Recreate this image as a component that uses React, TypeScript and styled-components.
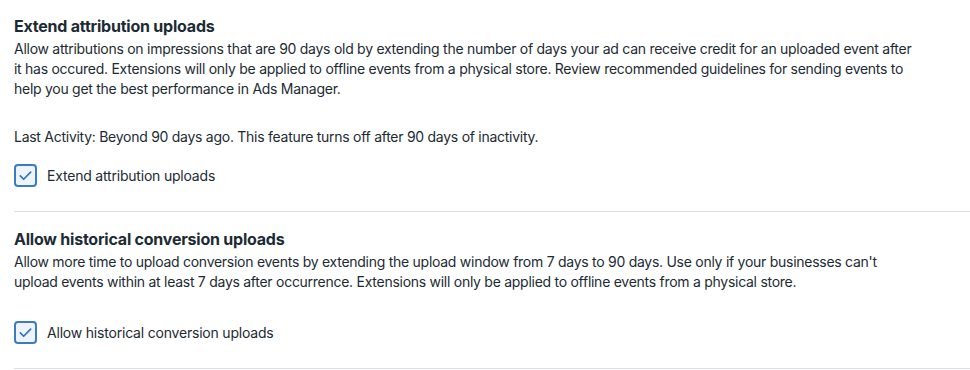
import React, { useState } from 'react'
import styled, { createGlobalStyle } from 'styled-components'

const GlobalStyle = createGlobalStyle`
  body {
    margin: 0;
    background: #ffffff;
    font-family: Inter, 'Noto Sans', 'Liberation Sans', sans-serif;
    color: #1c2b33;
  }
`

const Page = styled.div`
  padding: 16px 0 0 14px;
  width: 956px;
`

const Section = styled.section`
  padding-bottom: 24px;
  border-bottom: 1px solid #dcdee1;

  & + & {
    padding-top: 17px;
  }
`

const Title = styled.h3`
  margin: 0 0 3px;
  font-size: 16px;
  line-height: 20px;
  font-weight: 700;
  letter-spacing: -0.22px;
`

const Text = styled.p<{ $gap: number }>`
  margin: 0 0 ${(p) => p.$gap}px;
  font-size: 14px;
  line-height: 20px;
  letter-spacing: -0.27px;
`

const CheckRow = styled.label`
  display: flex;
  align-items: center;
  gap: 10px;
  font-size: 14px;
  line-height: 20px;
  letter-spacing: -0.2px;
  cursor: pointer;
`

const Box = styled.span<{ $checked: boolean }>`
  width: 23px;
  height: 23px;
  box-sizing: border-box;
  border-radius: 4px;
  border: 2px solid #3b7cc0;
  background: ${(p) => (p.$checked ? '#eef4fb' : '#ffffff')};
  display: flex;
  align-items: center;
  justify-content: center;
`

function Checkbox({ label }: { label: string }) {
  const [checked, setChecked] = useState(true)
  return (
    <CheckRow onClick={() => setChecked(!checked)}>
      <Box $checked={checked}>
        {checked && (
          <svg width="15" height="15" viewBox="0 0 16 16" fill="none">
            <path d="M2.5 8.5l3.5 3.5 7.5-7.5" stroke="#2f74c0" strokeWidth="1.8" strokeLinecap="round" strokeLinejoin="round" />
          </svg>
        )}
      </Box>
      {label}
    </CheckRow>
  )
}

export default function App() {
  return (
    <Page>
      <GlobalStyle />
      <Section>
        <Title>Extend attribution uploads</Title>
        <Text $gap={28}>
          Allow attributions on impressions that are 90 days old by extending the number of days your ad can receive credit for an uploaded event after
          <br />
          it has occured. Extensions will only be applied to offline events from a physical store. Review recommended guidelines for sending events to
          <br />
          help you get the best performance in Ads Manager.
        </Text>
        <Text $gap={17}>Last Activity: Beyond 90 days ago. This feature turns off after 90 days of inactivity.</Text>
        <Checkbox label="Extend attribution uploads" />
      </Section>
      <Section>
        <Title>Allow historical conversion uploads</Title>
        <Text $gap={29}>
          Allow more time to upload conversion events by extending the upload window from 7 days to 90 days. Use only if your businesses can't
          <br />
          upload events within at least 7 days after occurrence. Extensions will only be applied to offline events from a physical store.
        </Text>
        <Checkbox label="Allow historical conversion uploads" />
      </Section>
    </Page>
  )
}
